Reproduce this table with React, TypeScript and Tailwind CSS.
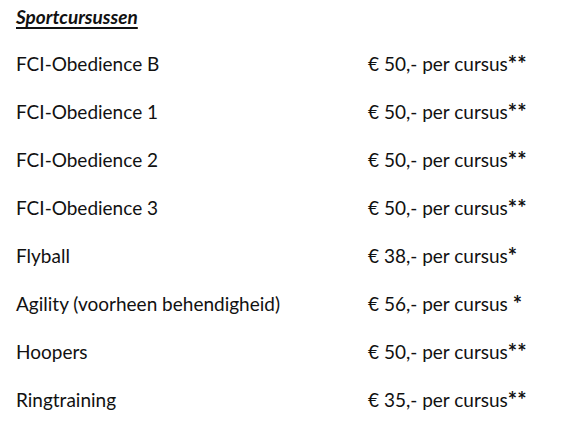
const rows: [string, string, string][] = [
  ["FCI-Obedience B", "€ 50,- per cursus", "**"],
  ["FCI-Obedience 1", "€ 50,- per cursus", "**"],
  ["FCI-Obedience 2", "€ 50,- per cursus", "**"],
  ["FCI-Obedience 3", "€ 50,- per cursus", "**"],
  ["Flyball", "€ 38,- per cursus", "*"],
  ["Agility (voorheen behendigheid)", "€ 56,- per cursus ", "*"],
  ["Hoopers", "€ 50,- per cursus", "**"],
  ["Ringtraining", "€ 35,- per cursus", "**"],
];

export default function App() {
  return (
    <div className="w-[564px] h-[433px] bg-white text-[#111] pl-4 pt-[5px] font-['Lato','Open_Sans',sans-serif] text-[19px]">
      <h2 className="h-[24px] leading-[24px] text-[19px] font-bold italic underline underline-offset-[3px] decoration-[1.5px]">
        Sportcursussen
      </h2>
      <div className="mt-[11px] grid grid-cols-[352px_1fr]">
        {rows.map(([name, price, stars]) => (
          <div key={name} className="contents">
            <div className="h-[48px] leading-[48px]">{name}</div>
            <div className="h-[48px] leading-[48px] whitespace-pre">
              {price}
              <span className="font-bold text-[22px] leading-none align-[-1px]">{stars}</span>
            </div>
          </div>
        ))}
      </div>
    </div>
  );
}
